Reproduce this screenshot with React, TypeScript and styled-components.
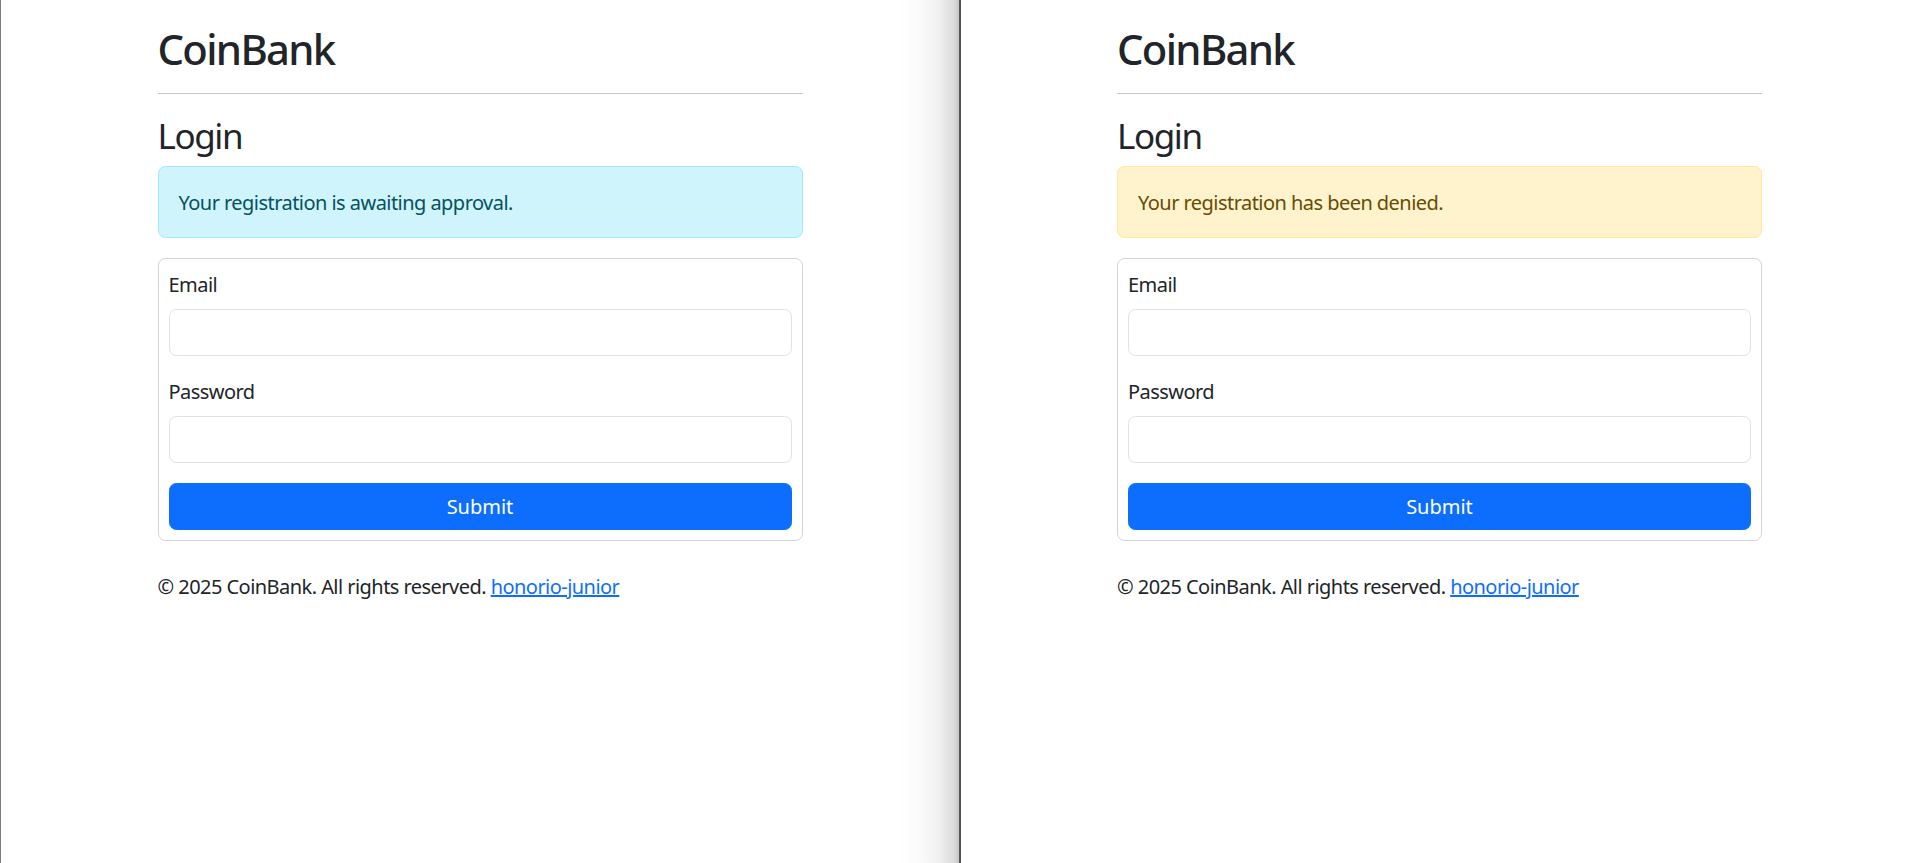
import React from "react";
import styled, { createGlobalStyle } from "styled-components";

const GlobalStyle = createGlobalStyle`
  html, body {
    margin: 0;
    padding: 0;
    height: 100%;
    background: #ffffff;
  }
  body {
    font-family: "Noto Sans", "Open Sans", "Liberation Sans", sans-serif;
    color: #212529;
    letter-spacing: -0.034em;
  }
  * { box-sizing: border-box; }
`;

const Desktop = styled.div`
  display: flex;
  height: 100vh;
  overflow: hidden;
  background: #ffffff;
`;

const BrowserPane = styled.div<{ $front?: boolean }>`
  position: relative;
  flex: none;
  width: 959px;
  height: 100%;
  background: #ffffff;
  ${(p) =>
    p.$front
      ? `
    border-left: 2px solid #6e6e6e;
    z-index: 1;
    &::before {
      content: "";
      position: absolute;
      top: 0;
      bottom: 0;
      right: 100%;
      width: 62px;
      pointer-events: none;
      background: linear-gradient(
        to right,
        rgba(0, 0, 0, 0) 0%,
        rgba(0, 0, 0, 0.02) 35%,
        rgba(0, 0, 0, 0.06) 65%,
        rgba(0, 0, 0, 0.14) 88%,
        rgba(0, 0, 0, 0.26) 100%
      );
    }
  `
      : `
    border-left: 1px solid #7c7c7c;
  `}
`;

const Container = styled.div`
  width: 645px;
  margin: 0 auto;
  padding-top: 24px;
`;

const Brand = styled.h1`
  margin: 0;
  font-size: 41.8px;
  line-height: 50px;
  font-weight: 500;
  letter-spacing: -0.04em;
  color: #212529;
`;

const Rule = styled.hr`
  margin: 19px 0 20px;
  border: 0;
  border-top: 1px solid #c6c7c8;
`;

const PageTitle = styled.h2`
  margin: 0 0 10px;
  padding-top: 1px;
  font-size: 35px;
  line-height: 41px;
  font-weight: 400;
  letter-spacing: -0.04em;
  color: #212529;
`;

const alertColors = {
  info: { bg: "#cff4fc", border: "#9eeaf9", text: "#055160" },
  warning: { bg: "#fff3cd", border: "#ffe69c", text: "#664d03" },
};

const Alert = styled.div<{ $variant: "info" | "warning" }>`
  margin: 0 0 20px;
  padding: 21px 20px 19px;
  border: 1px solid ${(p) => alertColors[p.$variant].border};
  border-radius: 7.5px;
  background: ${(p) => alertColors[p.$variant].bg};
  color: ${(p) => alertColors[p.$variant].text};
  font-size: 20px;
  line-height: 30px;
`;

const Card = styled.form`
  border: 1px solid #d3d4d5;
  border-radius: 7.5px;
  padding: 10px;
  background: #ffffff;
`;

const Field = styled.div`
  margin-bottom: 20px;
`;

const Label = styled.label`
  display: block;
  margin-bottom: 9px;
  padding-top: 1px;
  font-size: 20px;
  line-height: 30px;
  color: #212529;
`;

const Input = styled.input`
  display: block;
  width: 100%;
  height: 47px;
  padding: 7px 15px;
  border: 1px solid #dee2e6;
  border-radius: 7.5px;
  background: #ffffff;
  font: inherit;
  font-size: 20px;
  color: #212529;
  outline: none;
`;

const SubmitButton = styled.button`
  display: block;
  width: 100%;
  height: 47px;
  padding: 1px 0 0;
  border: 1px solid #0d6efd;
  border-radius: 7.5px;
  background: #0d6efd;
  color: #ffffff;
  font: inherit;
  font-size: 20px;
  line-height: 30px;
  cursor: pointer;
`;

const Footer = styled.footer`
  margin-top: 31px;
  font-size: 20px;
  line-height: 30px;
  color: #212529;
`;

const FooterLink = styled.a`
  color: #0d6efd;
  text-decoration: underline;
`;

type LoginPageProps = {
  variant: "info" | "warning";
  message: string;
};

function LoginPage({ variant, message }: LoginPageProps) {
  return (
    <Container>
      <Brand>CoinBank</Brand>
      <Rule />
      <PageTitle>Login</PageTitle>
      <Alert $variant={variant}>{message}</Alert>
      <Card onSubmit={(e) => e.preventDefault()}>
        <Field>
          <Label>Email</Label>
          <Input type="email" />
        </Field>
        <Field>
          <Label>Password</Label>
          <Input type="password" />
        </Field>
        <SubmitButton type="submit">Submit</SubmitButton>
      </Card>
      <Footer>
        © 2025 CoinBank. All rights reserved.{" "}
        <FooterLink href="#">honorio-junior</FooterLink>
      </Footer>
    </Container>
  );
}

export default function App() {
  return (
    <>
      <GlobalStyle />
      <Desktop>
        <BrowserPane>
          <LoginPage variant="info" message="Your registration is awaiting approval." />
        </BrowserPane>
        <BrowserPane $front>
          <LoginPage variant="warning" message="Your registration has been denied." />
        </BrowserPane>
      </Desktop>
    </>
  );
}
